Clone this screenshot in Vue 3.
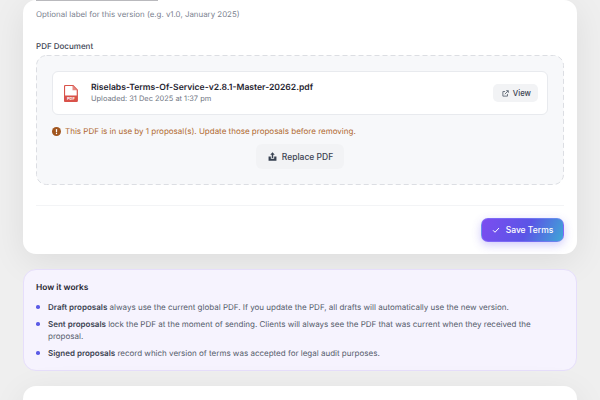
<template>
  <div class="page">
    <div class="card main-card">
      <div class="version-input"></div>
      <p class="hint">Optional label for this version (e.g. v1.0, January 2025)</p>

      <label class="field-label">PDF Document</label>
      <div class="dropzone">
        <svg class="dash-frame" width="528" height="130">
          <rect x="0.500" y="0.500" width="527" height="129" rx="10" fill="#f7f8fa" stroke="#dcdee3" stroke-dasharray="5 3" />
        </svg>
        <div class="file-row">
          <svg class="pdf-icon" viewBox="0 0 14 17" width="14" height="17">
            <path d="M1.500 0.500H9L13.300 5V15.500a1 1 0 0 1-1 1H1.500a1 1 0 0 1-1-1V1.500a1 1 0 0 1 1-1Z" fill="#fff" stroke="#d9534a" stroke-width="1.200" />
            <path d="M8.500 0.500V5.200H13.300Z" fill="#e58a83" />
            <rect x="0.500" y="10.500" width="12.800" height="6" fill="#d9534a" />
            <text x="6.900" y="15.200" text-anchor="middle" class="pdf-tag">PDF</text>
          </svg>
          <div class="file-info">
            <div class="file-name">{{ file.name }}</div>
            <div class="file-date">Uploaded: {{ file.uploaded }}</div>
          </div>
          <button class="btn-soft btn-view">
            <svg viewBox="0 0 16 16" width="7" height="7" fill="none" stroke="#4b5563" stroke-width="1.800">
              <path d="M7 3.500H2V14H12.500V9" />
              <path d="M6.500 9.500L14 2M9.500 1.500H14.500V6.500" />
            </svg>
            View
          </button>
        </div>

        <div class="warning">
          <svg viewBox="0 0 16 16" width="9" height="9">
            <circle cx="8" cy="8" r="8" fill="#a1561f" />
            <rect x="6.900" y="3.500" width="2.200" height="5.800" rx="1" fill="#fff" />
            <circle cx="8" cy="11.500" r="1.200" fill="#fff" />
          </svg>
          <span>This PDF is in use by {{ usageCount }} proposal(s). Update those proposals before removing.</span>
        </div>

        <div class="replace-wrap">
          <button class="btn-soft btn-replace">
            <svg viewBox="0 0 16 16" width="9" height="9" fill="#374151">
              <path d="M8 0.500L12 4.800H9.300V10.500H6.700V4.800H4Z" />
              <path d="M1 8H5V11.800H11V8H15V15.500H1Z" />
            </svg>
            Replace PDF
          </button>
        </div>
      </div>

      <div class="footer">
        <button class="btn-save">
          <svg viewBox="0 0 16 16" width="8" height="8" fill="none" stroke="#fff" stroke-width="2">
            <path d="M2 8.500L6 12.500L14 4" />
          </svg>
          Save Terms
        </button>
      </div>
    </div>

    <div class="info-box">
      <h4>How it works</h4>
      <ul>
        <li v-for="item in notes" :key="item.title">
          <strong>{{ item.title }}</strong> {{ item.text }}
        </li>
      </ul>
    </div>

    <div class="card next-card"></div>
  </div>
</template>

<script setup>
const file = {
  name: "Riselabs-Terms-Of-Service-v2.8.1-Master-20262.pdf",
  uploaded: "31 Dec 2025 at 1:37 pm",
};

const usageCount = 1;

const notes = [
  {
    title: "Draft proposals",
    text: "always use the current global PDF. If you update the PDF, all drafts will automatically use the new version.",
  },
  {
    title: "Sent proposals",
    text: "lock the PDF at the moment of sending. Clients will always see the PDF that was current when they received the proposal.",
  },
  {
    title: "Signed proposals",
    text: "record which version of terms was accepted for legal audit purposes.",
  },
];
</script>

<style>
html,
body {
  margin: 0;
  overflow: hidden;
}
</style>

<style scoped>
.page {
  height: 400px;
  overflow: hidden;
  box-sizing: border-box;
  padding: 0 23px;
  background: #efefef;
  font-family: Inter, "Liberation Sans", sans-serif;
  text-rendering: geometricPrecision;
  color: #1f2430;
}

.card {
  background: #fff;
  border-radius: 13px;
  box-shadow: 0 8px 34px rgba(0, 0, 0, 0.08);
}

.main-card {
  height: 254px;
  box-sizing: border-box;
  padding: 0 13px;
}

.version-input {
  width: 122px;
  height: 1px;
  background: #b9b9bd;
}

.hint {
  margin: 8px 0 0;
  font-size: 7.900px;
  line-height: 11px;
  color: #7b8290;
}

.field-label {
  display: block;
  margin-top: 21px;
  font-size: 8px;
  line-height: 11px;
  font-weight: 500;
  color: #3c4352;
}

.dropzone {
  position: relative;
  margin-top: 3px;
  height: 130px;
  box-sizing: border-box;
  padding: 16px;
}

/* dashes are longer than a css dashed border gives */
.dash-frame {
  position: absolute;
  top: 0;
  left: 0;
}

.file-row {
  position: relative;
  display: flex;
  align-items: center;
  height: 44px;
  box-sizing: border-box;
  padding: 0 9px 0 11px;
  border: 1px solid #e8eaee;
  border-radius: 6px;
  background: #fff;
}

.pdf-icon {
  flex-shrink: 0;
  margin-right: 13px;
}

.pdf-tag {
  font-size: 4px;
  font-weight: 700;
  fill: #fff;
}

.file-info {
  flex: 1;
}

.file-name {
  font-size: 8.600px;
  line-height: 12px;
  font-weight: 600;
  color: #1f2430;
}

.file-date {
  font-size: 7.450px;
  line-height: 10px;
  color: #6f7683;
}

.btn-soft {
  display: flex;
  align-items: center;
  border: 0;
  background: #f2f3f5;
  font-family: inherit;
  font-weight: 500;
  color: #3c4352;
}

.btn-view {
  gap: 4px;
  height: 18px;
  padding: 0 7px 0 9px;
  border-radius: 5px;
  font-size: 7.700px;
}

.warning {
  position: relative;
  display: flex;
  align-items: center;
  gap: 4px;
  margin-top: 11px;
  font-size: 8px;
  line-height: 11px;
  color: #b0682f;
}

.replace-wrap {
  position: relative;
  display: flex;
  justify-content: center;
  margin-top: 7px;
}

.btn-replace {
  gap: 5px;
  height: 25px;
  padding: 0 11px 0 12px;
  border-radius: 6px;
  font-size: 8.500px;
}

.footer {
  display: flex;
  justify-content: flex-end;
  margin-top: 20px;
  padding-top: 12px;
  border-top: 1px solid #f3f4f6;
}

.btn-save {
  display: flex;
  align-items: center;
  justify-content: center;
  gap: 6px;
  width: 83px;
  height: 24px;
  border: 1px solid rgba(140, 130, 255, 0.5);
  border-radius: 7px;
  background: linear-gradient(115deg, #7c4df0 0%, #5b55e6 55%, #3fa7d6 100%);
  box-shadow: 0 3px 10px rgba(99, 80, 240, 0.3);
  font-family: inherit;
  font-size: 8.500px;
  font-weight: 500;
  color: #fff;
}

.info-box {
  margin-top: 15px;
  height: 102px;
  box-sizing: border-box;
  padding: 13px 12px 0;
  border: 1px solid #e6defb;
  border-radius: 13px;
  background: #f6f3fe;
}

.info-box h4 {
  margin: 0;
  font-size: 8.400px;
  line-height: 11px;
  font-weight: 600;
  color: #1f2430;
}

.info-box ul {
  margin: 7px 0 0;
  padding: 0;
  list-style: none;
}

.info-box li {
  position: relative;
  margin-bottom: 5px;
  padding-left: 12px;
  font-size: 8px;
  line-height: 12px;
  color: #555c6b;
}

.info-box li::before {
  content: "";
  position: absolute;
  left: 0;
  top: 4px;
  width: 3.500px;
  height: 3.500px;
  border-radius: 50%;
  background: #5b5be6;
}

.info-box strong {
  font-weight: 600;
  color: #3c4352;
}

.next-card {
  margin-top: 15px;
  height: 60px;
}
</style>
